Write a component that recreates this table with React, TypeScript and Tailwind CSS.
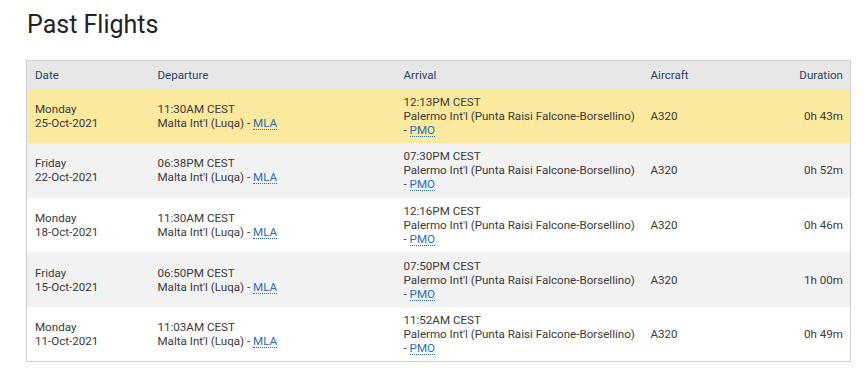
const flights = [
  { day: "Monday", date: "25-Oct-2021", dep: "11:30AM CEST", arr: "12:13PM CEST", dur: "0h 43m" },
  { day: "Friday", date: "22-Oct-2021", dep: "06:38PM CEST", arr: "07:30PM CEST", dur: "0h 52m" },
  { day: "Monday", date: "18-Oct-2021", dep: "11:30AM CEST", arr: "12:16PM CEST", dur: "0h 46m" },
  { day: "Friday", date: "15-Oct-2021", dep: "06:50PM CEST", arr: "07:50PM CEST", dur: "1h 00m" },
  { day: "Monday", date: "11-Oct-2021", dep: "11:03AM CEST", arr: "11:52AM CEST", dur: "0h 49m" },
];

function Code({ children }: { children: string }) {
  return (
    <a className="text-[#2a6eb5] border-b border-dotted border-[#2a6eb5] leading-[12px] inline-block">
      {children}
    </a>
  );
}

export default function App() {
  const rowBg = ["bg-[#fbe99e]", "bg-[#f2f2f2]", "bg-white", "bg-[#f2f2f2]", "bg-white"];
  return (
    <div className="min-h-screen bg-white px-[26px] pt-[10px] font-['Roboto',sans-serif] text-[#3a3a3a]">
      <h1 className="text-[25px] leading-[30px] text-[#222] ml-[1px]">Past Flights</h1>
      <table className="mt-[20px] w-[825px] table-fixed border border-[#d0d0d0] border-collapse text-[11.6px] leading-[14px]">
        <colgroup>
          <col className="w-[123px]" />
          <col className="w-[246px]" />
          <col className="w-[247px]" />
          <col className="w-[110px]" />
          <col />
        </colgroup>
        <thead>
          <tr className="bg-[#e7e7e7] text-[#2c4560] h-[28px]">
            <th className="font-normal text-left pl-[8px]">Date</th>
            <th className="font-normal text-left pl-[8px]">Departure</th>
            <th className="font-normal text-left pl-[8px]">Arrival</th>
            <th className="font-normal text-left pl-[8px]">Aircraft</th>
            <th className="font-normal text-right pr-[7px]">Duration</th>
          </tr>
        </thead>
        <tbody>
          {flights.map((f, i) => (
            <tr key={i} className={`${rowBg[i]} h-[54.6px]`}>
              <td className="pl-[8px] align-middle">
                <div>{f.day}</div>
                <div>{f.date}</div>
              </td>
              <td className="pl-[8px] align-middle">
                <div>{f.dep}</div>
                <div>
                  Malta Int'l (Luqa) - <Code>MLA</Code>
                </div>
              </td>
              <td className="pl-[8px] align-middle">
                <div>{f.arr}</div>
                <div className="whitespace-nowrap">Palermo Int'l (Punta Raisi Falcone-Borsellino)</div>
                <div>
                  - <Code>PMO</Code>
                </div>
              </td>
              <td className="pl-[8px] align-middle">A320</td>
              <td className="pr-[7px] text-right align-middle">{f.dur}</td>
            </tr>
          ))}
        </tbody>
      </table>
    </div>
  );
}
